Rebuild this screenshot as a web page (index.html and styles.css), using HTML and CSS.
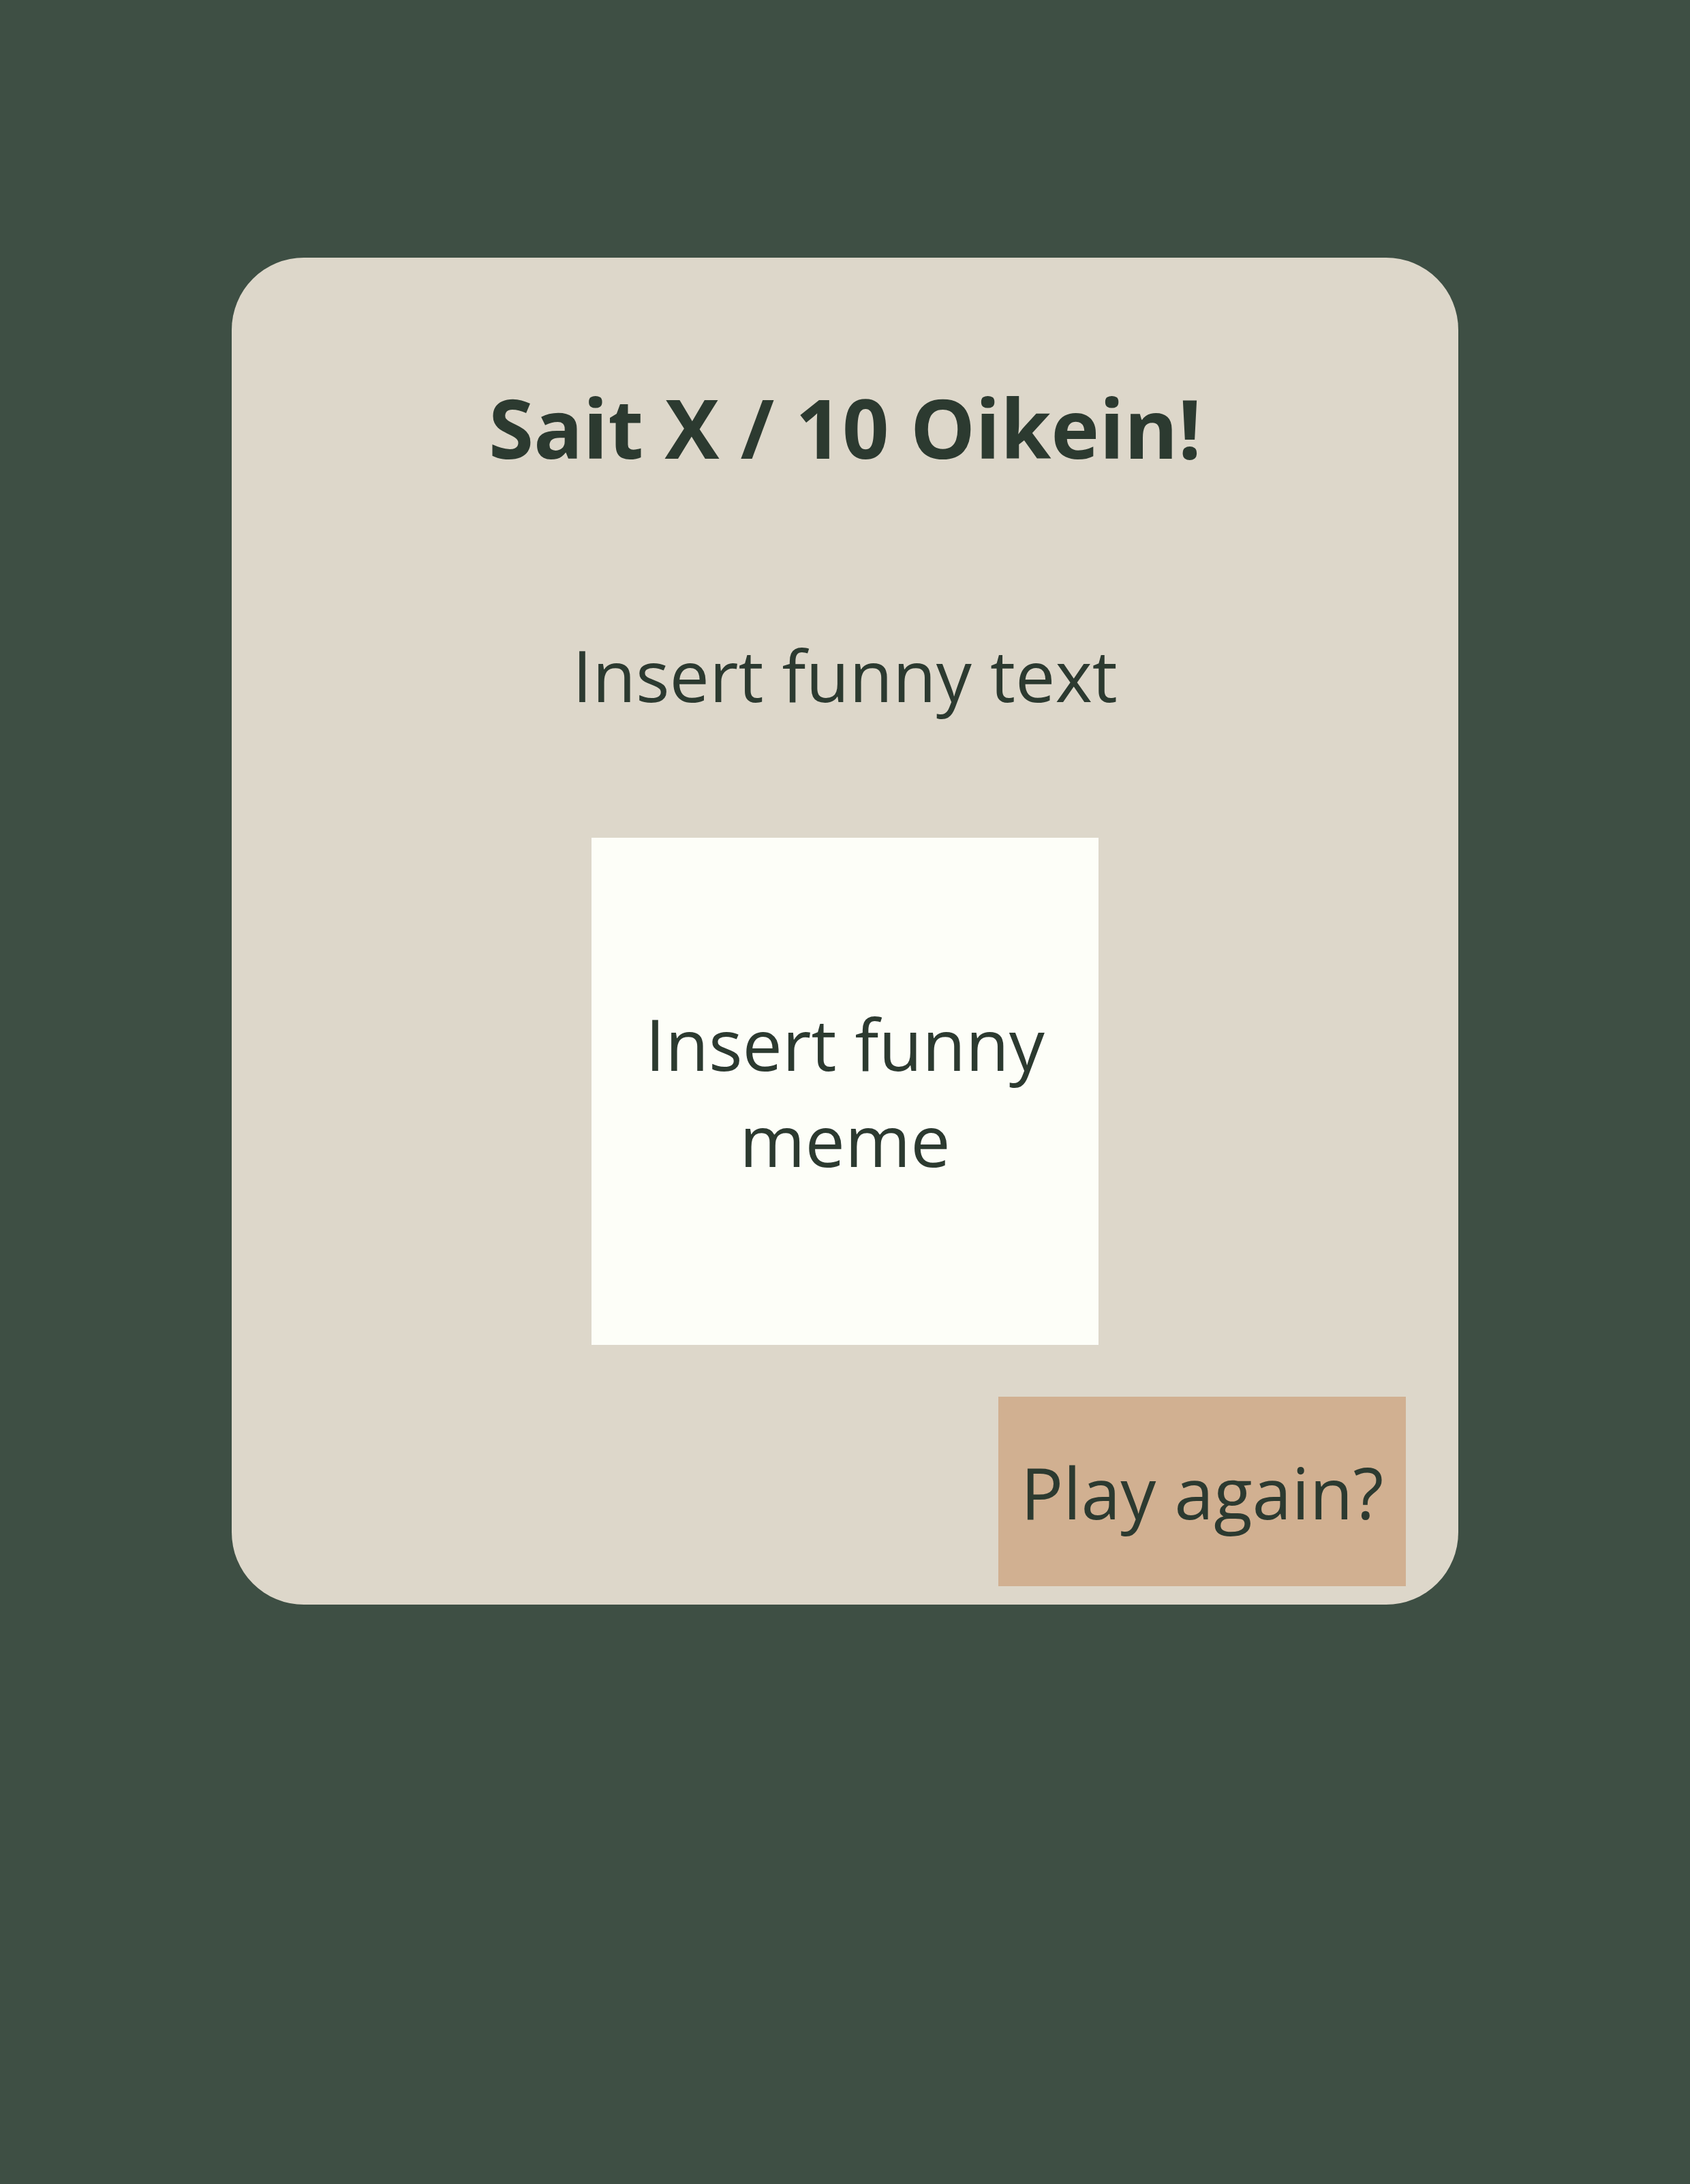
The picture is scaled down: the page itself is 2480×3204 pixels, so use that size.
FILE: index.html
```html
<!DOCTYPE html>
<html lang="fi">
<head>
  <meta charset="UTF-8">
  <meta name="viewport" content="width=device-width, initial-scale=1.0">
  <title>Tulos</title>
  <link rel="stylesheet" href="styles.css">
</head>
<body>
  <div class="result-card">
    <h1 class="score">Sait X / 10 Oikein!</h1>
    <p class="funny-text">Insert funny text</p>
    <div class="meme">Insert funny meme</div>
    <button type="button" class="play-again">Play again?</button>
  </div>
</body>
</html>
```

FILE: styles.css
```css
body {
  font-family: "Open Sans", "Noto Sans", sans-serif;
  background-color: #3e4f44;
  color: #2c3a30;
  margin: 0;
  padding: 378px 0 0;
  min-height: 100vh;
  box-sizing: border-box;
}

.result-card {
  width: 1800px;
  margin: 0 auto;
  box-sizing: border-box;
  background-color: #ddd7ca;
  border-radius: 106px;
  padding: 167px 77px 27px;
  display: flex;
  flex-direction: column;
  align-items: center;
}

.score {
  margin: 0;
  font-size: 120px;
  font-weight: 700;
  line-height: normal;
}

.funny-text {
  margin: 211px 0 0;
  font-size: 104px;
  line-height: normal;
}

.meme {
  margin-top: 169px;
  width: 744px;
  height: 744px;
  padding: 0 40px;
  box-sizing: border-box;
  background-color: #fdfef8;
  display: flex;
  align-items: center;
  justify-content: center;
  text-align: center;
  font-size: 104px;
  line-height: normal;
}

.play-again {
  align-self: flex-end;
  margin-top: 76px;
  width: 598px;
  height: 278px;
  padding: 0;
  border: none;
  border-radius: 0;
  background-color: #d1b091;
  color: #2c3a30;
  font-family: inherit;
  font-size: 104px;
  cursor: pointer;
}
```
